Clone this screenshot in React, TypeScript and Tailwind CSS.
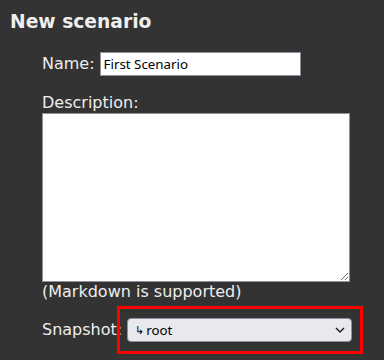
import React from "react";

export default function App() {
  return (
    <div
      className="w-full h-[360px] overflow-hidden bg-[#333333] text-[#eeeeee] pl-[10px] pt-[11px]"
      style={{ fontFamily: '"DejaVu Sans", sans-serif' }}
    >
      <h3 className="text-[18.72px] font-bold leading-[22px] text-[#eeeeee]">New scenario</h3>
      <div className="ml-[32px] mt-[19px] flex flex-col">
        <div className="flex items-center gap-[5px] text-[16px] leading-[18.6px]">
          <span>Name:</span>
          <input
            defaultValue="First Scenario"
            className="w-[201px] h-[24px] bg-white border border-[#8f8f9d] px-[3px] text-[13.33px] text-black outline-none"
            style={{ fontFamily: '"Noto Sans", sans-serif' }}
          />
        </div>
        <div className="mt-[18px] text-[16px] leading-[18.6px]">Description:</div>
        <textarea className="block w-[308px] h-[169px] bg-white border border-[#8f8f9d] text-black" />
        <div className="mt-[1px] text-[16px] leading-[18.6px]">(Markdown is supported)</div>
        <div className="mt-[17px] flex items-center gap-[5px] text-[16px] leading-[18.6px]">
          <span>Snapshot:</span>
          <div className="relative">
            <div className="w-[225px] h-[24px] bg-[#e9e9ed] border border-[#8f8f9d] rounded-[4px] flex items-center justify-between pl-[7px] pr-[6px] text-black">
              <span
                className="text-[13.33px] flex items-center"
                style={{ fontFamily: '"Noto Sans", sans-serif' }}
              >
                <span className="text-[11px] mr-[2px]">↳</span>
                <span>root</span>
              </span>
              <svg width="10" height="6" viewBox="0 0 10 6" fill="none">
                <path d="M1 1 L5 5 L9 1" stroke="#1a1a1a" strokeWidth="1.4" />
              </svg>
            </div>
            <div className="absolute left-[-10px] top-[-12px] w-[246px] h-[48px] border-[3px] border-[#ff0000] pointer-events-none" />
          </div>
        </div>
      </div>
    </div>
  );
}
